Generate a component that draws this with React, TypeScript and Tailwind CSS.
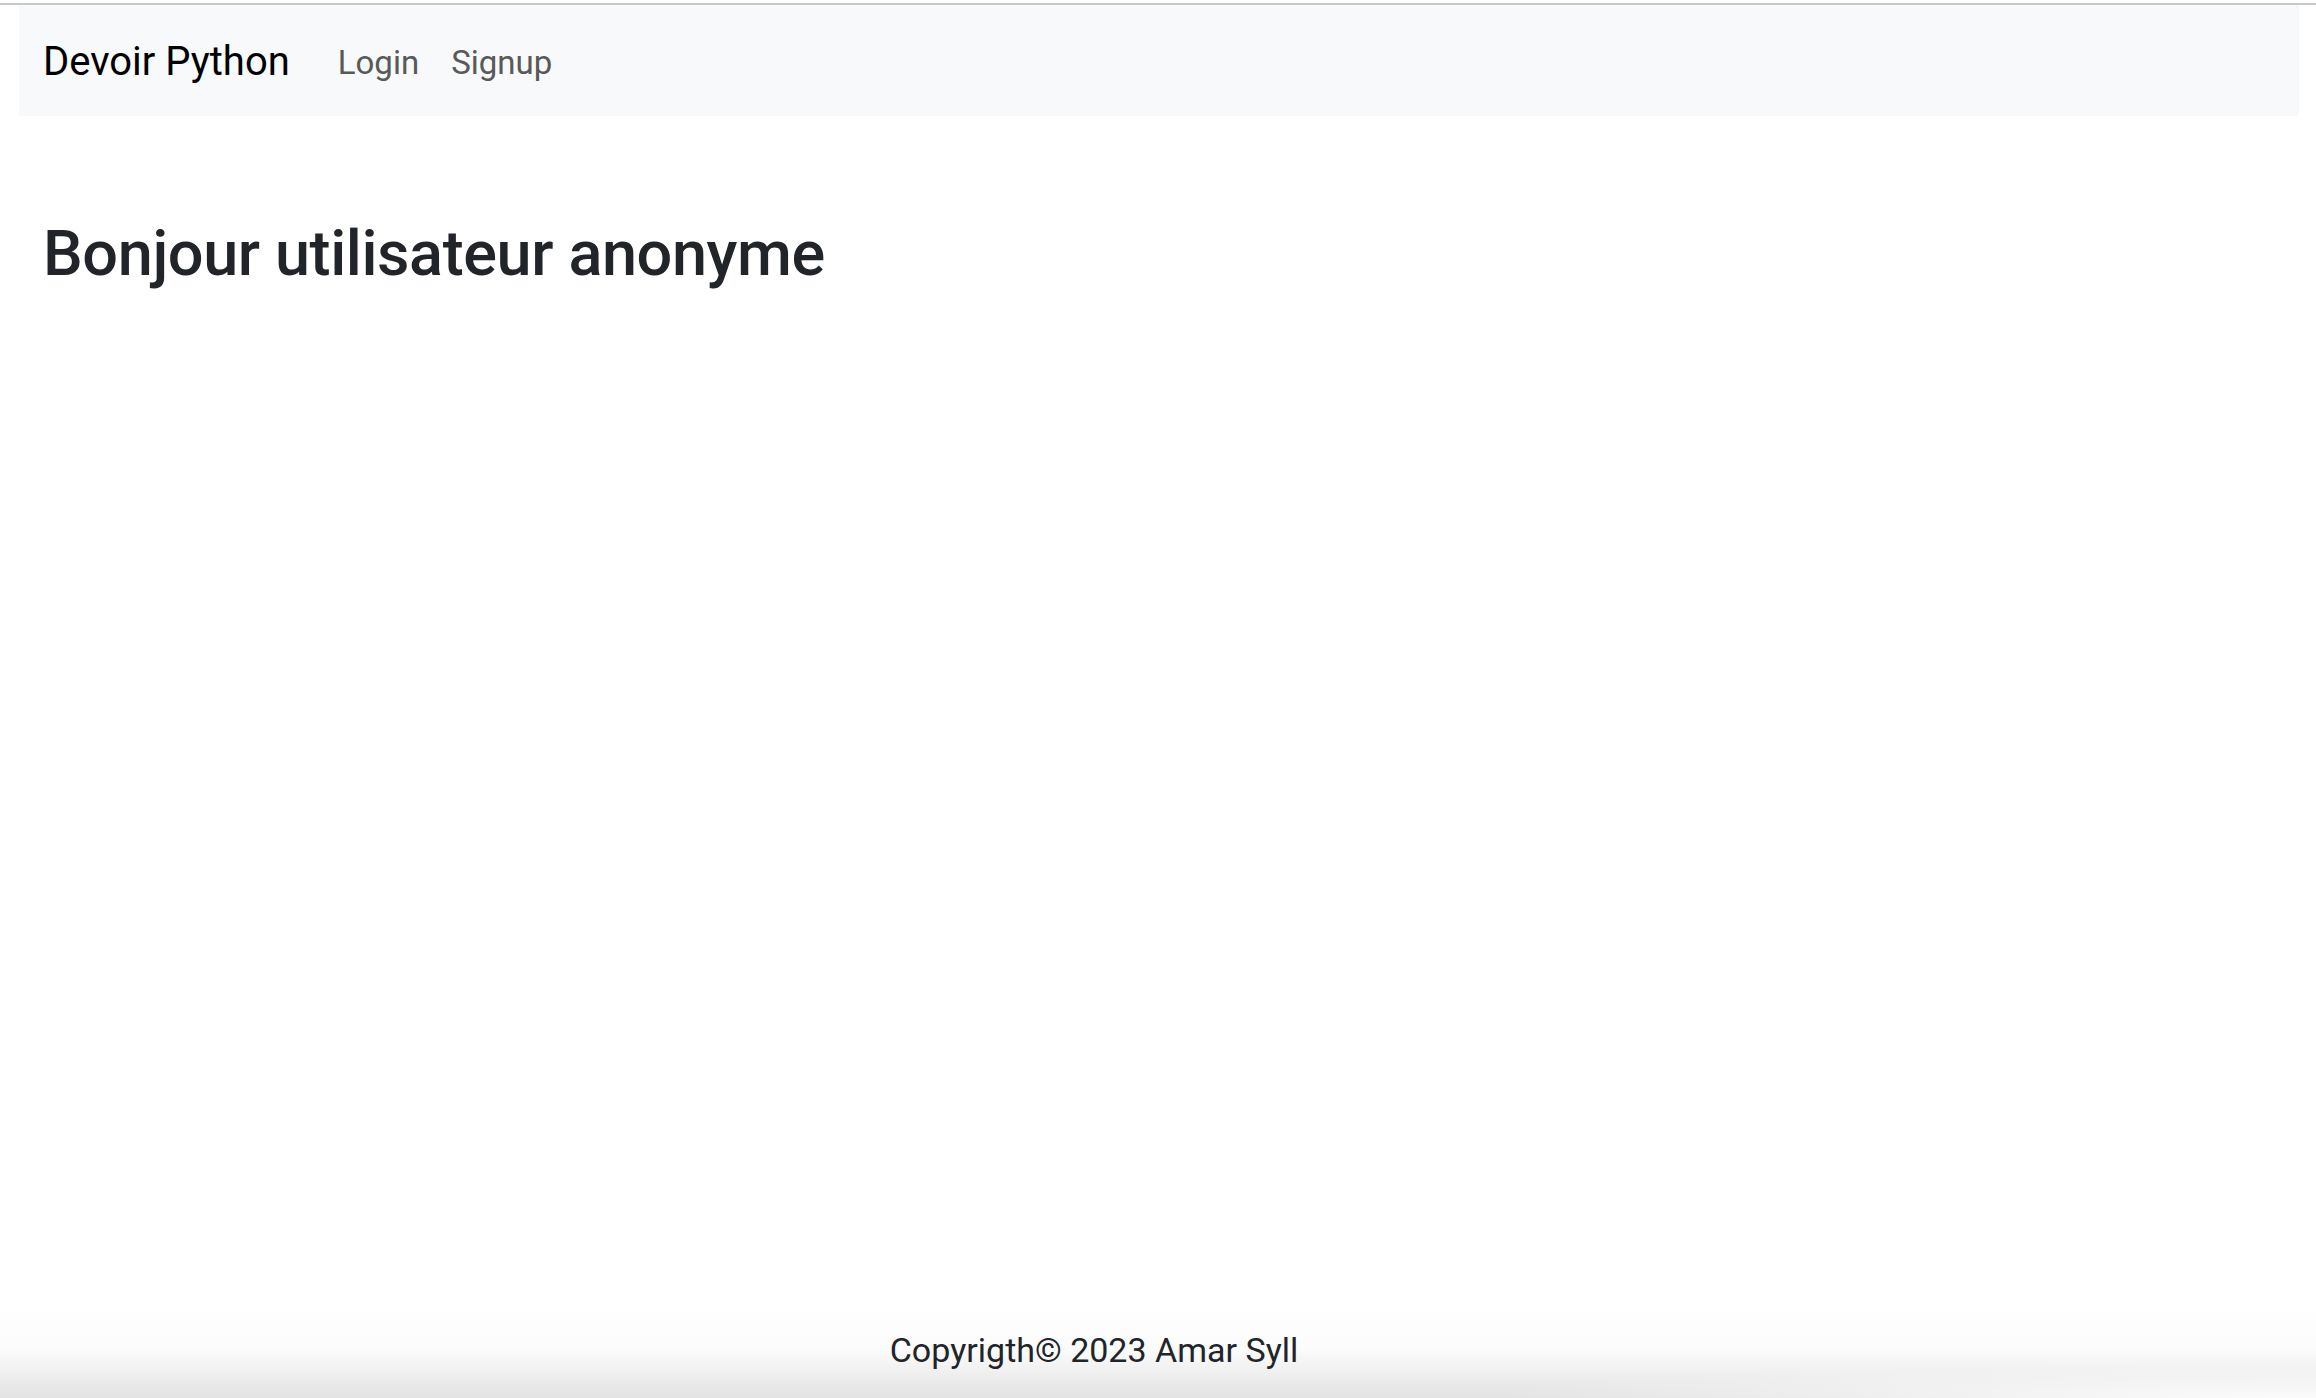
const App = () => {
  return (
    <div
      className="h-[1398px] flex flex-col bg-white text-[#212529] overflow-hidden"
      style={{ fontFamily: 'Roboto, "Liberation Sans", Arial, sans-serif' }}
    >
      {/* top rule */}
      <div className="pt-[3px]">
        <div className="h-[2px] bg-[#c8c8cb]" />
      </div>

      {/* Navbar */}
      <nav className="ml-[19px] mr-[17px] h-[111px] bg-[#f8f9fa] flex items-center pl-[24px] pt-[3px]">
        <a className="text-[40px] text-black leading-none mr-[48px]">Devoir Python</a>
        <div className="flex items-center gap-[32px] text-[33px] text-[#595959] leading-none">
          <a>Login</a>
          <a>Signup</a>
        </div>
      </nav>

      {/* Main */}
      <main className="flex-1 px-[43px] pt-[106px]">
        <h2 className="text-[63px] font-medium leading-none tracking-[-0.4px]">Bonjour utilisateur anonyme</h2>
      </main>

      {/* Footer */}
      <footer className="relative h-[96px] bg-gradient-to-b from-white via-[#fbfbfb] to-[#e3e3e3]">
        <div className="absolute inset-0 bg-[radial-gradient(ellipse_at_bottom_right,rgba(255,255,255,0.9),transparent_25%)]" />
        <div className="relative h-full flex items-center justify-center pr-[128px]">
          <span className="text-[34px] leading-none">Copyrigth© 2023 Amar Syll</span>
        </div>
      </footer>
    </div>
  );
};

export default App;
